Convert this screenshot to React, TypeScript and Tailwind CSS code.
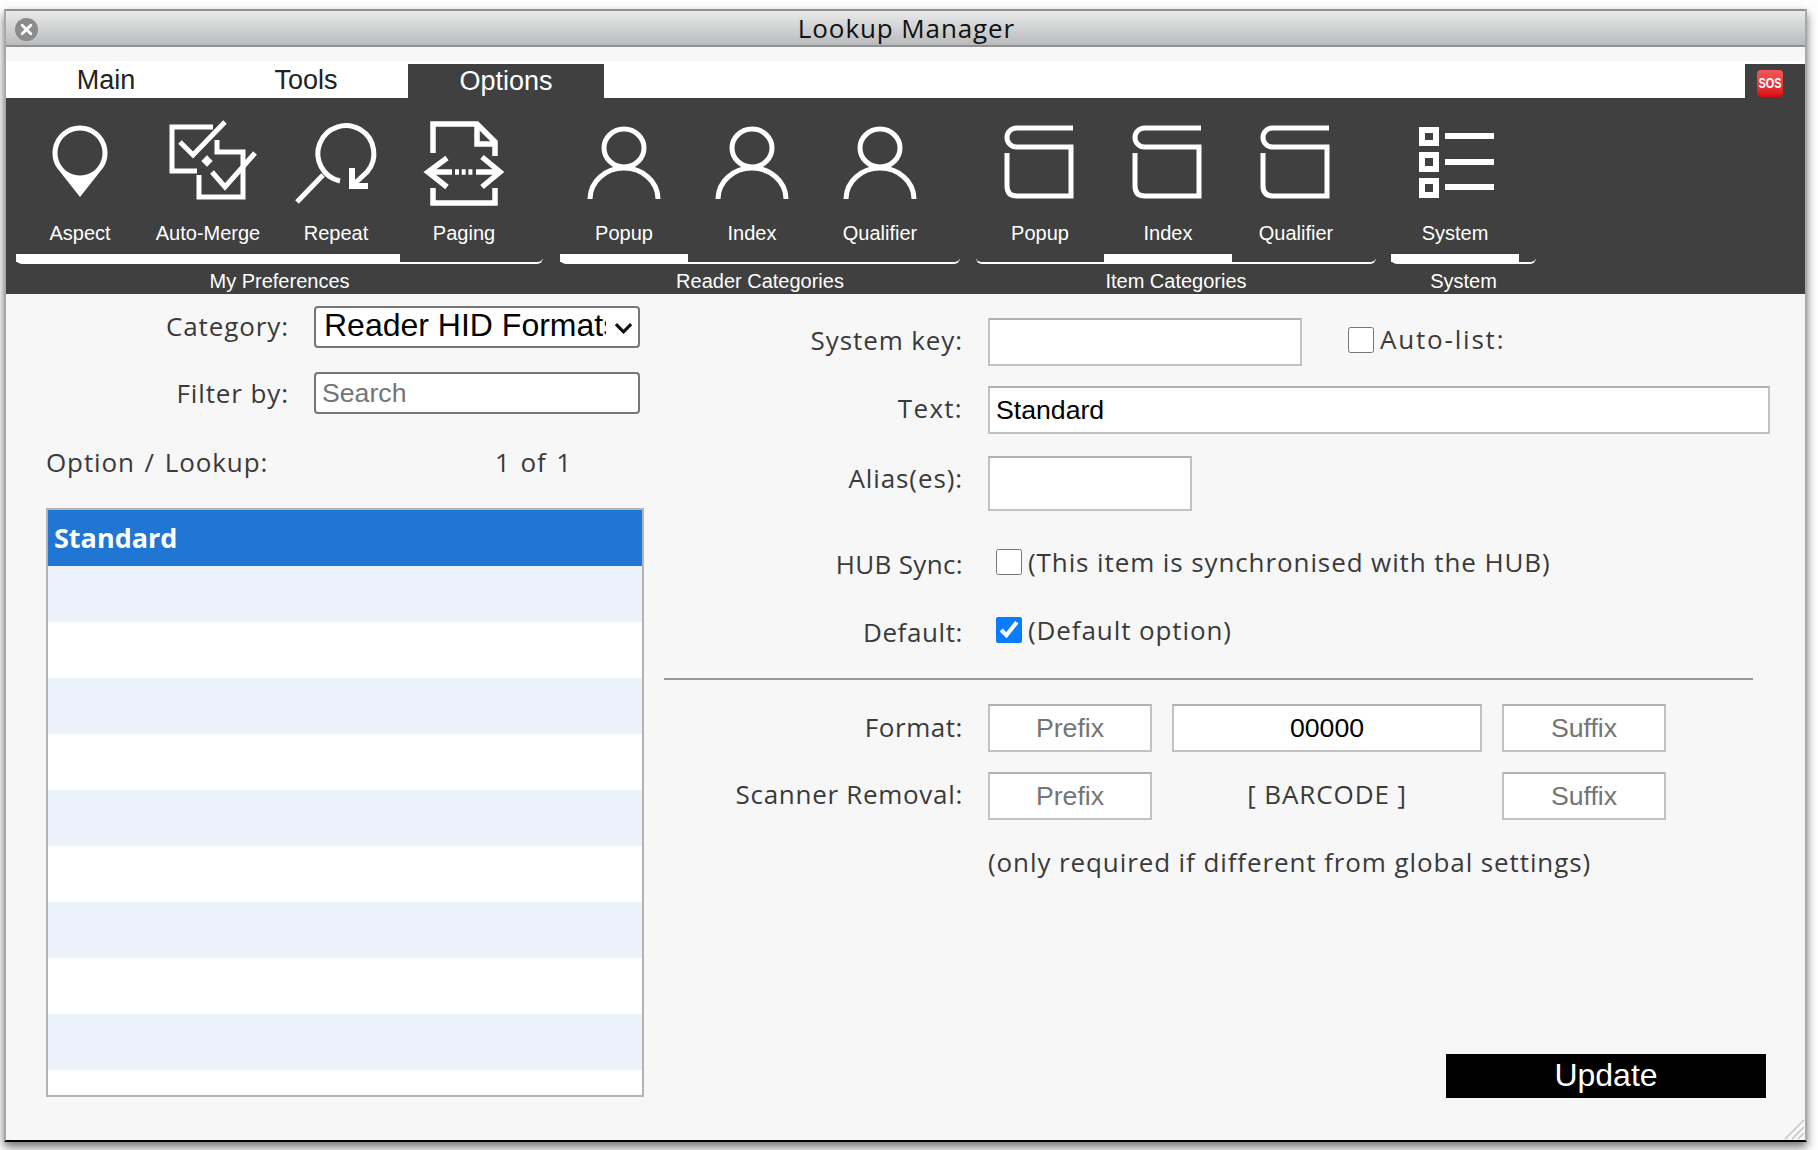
import { ReactNode } from 'react';

const stroke = { fill: 'none', stroke: '#fff', strokeWidth: 5 };

function PinIcon() {
  return (
    <svg viewBox="0 0 100 90" className="w-[100px] h-[90px]">
      <path
        fill="#fff"
        fillRule="evenodd"
        d="M50 79 L26.3 49 A27.5 27.5 0 1 1 73.7 49 Z M50 12.5 A22.5 22.5 0 1 0 50.01 12.5 Z"
      />
    </svg>
  );
}

function MergeIcon() {
  return (
    <svg viewBox="0 0 100 90" className="w-[100px] h-[90px]" style={{ overflow: 'visible' }}>
      <g {...stroke}>
        <path d="M55 9 H14 V53 H39" />
        <path d="M59 22 V34 H85 V79 H41 V57" />
        <path d="M22 24 L35 37 L67 4" />
        <path d="M54 54 L67 69 L97 35" />
      </g>
      <rect x="45" y="39" width="8" height="8" fill="#fff" transform="rotate(45 49 43)" />
    </svg>
  );
}

function RepeatIcon() {
  return (
    <svg viewBox="0 0 100 90" className="w-[100px] h-[90px]">
      <g {...stroke}>
        <path d="M54 63 A28 28 0 1 1 81 54 L66 68" />
        <path d="M66 50 V68 H82" strokeWidth={6} />
        <path d="M37 57 L11 84" />
      </g>
    </svg>
  );
}

function PagingIcon() {
  return (
    <svg viewBox="0 0 100 90" className="w-[100px] h-[90px]">
      <g {...stroke} strokeWidth={5.5}>
        <path d="M19 35 V6 H63 L81 24 V38" />
        <path d="M81 70 V85 H19 V70" />
        <path d="M63 6 V26 H81" />
        <path d="M33 40 L14 54 L33 69" />
        <path d="M68 39 L86 54 L68 69" />
        <path d="M14 54 H38" />
        <path d="M41 54 H59" strokeDasharray="4 2.7" />
        <path d="M62 54 H86" />
      </g>
    </svg>
  );
}

function PersonIcon() {
  return (
    <svg viewBox="0 0 100 90" className="w-[100px] h-[90px]">
      <g {...stroke}>
        <ellipse cx="50" cy="30" rx="20" ry="19" />
        <path d="M16 81 A34 31 0 0 1 84 81" />
      </g>
    </svg>
  );
}

function BoxIcon() {
  return (
    <svg viewBox="0 0 100 90" className="w-[100px] h-[90px]">
      <path
        {...stroke}
        d="M83 10 H26.5 A9.5 9.5 0 0 0 26.5 29 H81 V78 H27 Q17 78 17 68 V35"
      />
    </svg>
  );
}

function ListIcon() {
  return (
    <svg viewBox="0 0 100 90" className="w-[100px] h-[90px]">
      <g {...stroke} strokeWidth={6}>
        <rect x="17" y="12" width="14" height="13" />
        <rect x="17" y="37" width="14" height="14" />
        <rect x="17" y="63" width="14" height="14" />
        <path d="M40 18 H89 M40 44 H89 M40 69 H89" />
      </g>
    </svg>
  );
}

type Item = { label: string; icon: ReactNode; active?: boolean };

const groups: { title: string; className: string; items: Item[] }[] = [
  {
    title: 'My Preferences',
    className: 'w-[527px] mr-[17px]',
    items: [
      { label: 'Aspect', icon: <PinIcon />, active: true },
      { label: 'Auto-Merge', icon: <MergeIcon />, active: true },
      { label: 'Repeat', icon: <RepeatIcon />, active: true },
      { label: 'Paging', icon: <PagingIcon /> },
    ],
  },
  {
    title: 'Reader Categories',
    className: 'w-[400px] mr-[16px]',
    items: [
      { label: 'Popup', icon: <PersonIcon />, active: true },
      { label: 'Index', icon: <PersonIcon /> },
      { label: 'Qualifier', icon: <PersonIcon /> },
    ],
  },
  {
    title: 'Item Categories',
    className: 'w-[400px] mr-[15px]',
    items: [
      { label: 'Popup', icon: <BoxIcon /> },
      { label: 'Index', icon: <BoxIcon />, active: true },
      { label: 'Qualifier', icon: <BoxIcon /> },
    ],
  },
  {
    title: 'System',
    className: 'w-[145px]',
    items: [{ label: 'System', icon: <ListIcon />, active: true }],
  },
];

const labelFont = "font-['Open_Sans',sans-serif] text-[26px] tracking-[0.9px] text-[#3a3a3a]";
const fieldBase =
  'h-full bg-white border-2 border-[#c2c2c2] border-t-[#b2b2b2] text-[26.67px] text-black placeholder:text-[#757575] outline-none';

function FormRow({
  label,
  className,
  labelClass,
  children,
}: {
  label: string;
  className: string;
  labelClass?: string;
  children: ReactNode;
}) {
  return (
    <div className={`flex items-center ${className}`}>
      <div className={`w-[299px] mr-[25px] text-right whitespace-nowrap ${labelFont} ${labelClass ?? ''}`}>{label}</div>
      {children}
    </div>
  );
}

export default function App() {
  const rows = Array.from({ length: 11 }, (_, i) => i);

  return (
    <div className="w-[1818px] h-[1150px] bg-[#fdfdfd] pt-[9px] pl-[4px] font-['Liberation_Sans',Arial,sans-serif] overflow-hidden">
      <div className="relative w-[1803px] h-[1133px] flex flex-col border-x-2 border-x-[#a8a8a8] border-b-2 border-b-black shadow-[0_5px_9px_rgba(0,0,0,0.55)]">
        {/* Title bar */}
        <div className="relative h-[38px] shrink-0 flex items-center justify-center border-t-2 border-t-[#8f8f8f] border-b-2 border-b-[#8e9092] bg-gradient-to-b from-[#e9eaea] to-[#b9bbbd]">
          <div className="absolute left-[9px] top-[7px] w-[23px] h-[23px] rounded-full bg-[#8b8b8b] flex items-center justify-center">
            <svg viewBox="0 0 12 12" className="w-[13px] h-[13px]">
              <path d="M2 2 L10 10 M10 2 L2 10" stroke="#fff" strokeWidth="2.6" strokeLinecap="round" />
            </svg>
          </div>
          <span className="ml-[2px] font-['Open_Sans',sans-serif] text-[26px] tracking-[0.9px] text-[#111]">Lookup Manager</span>
        </div>
        <div className="h-[14px] shrink-0 bg-[#f7f7f7]" />

        {/* Tabs */}
        <div className="h-[37px] shrink-0 flex items-end bg-white text-[27px] text-[#222]">
          <div className="w-[200px] h-full pt-[2px] flex items-center justify-center">Main</div>
          <div className="w-[200px] h-full pt-[2px] flex items-center justify-center">Tools</div>
          <div className="ml-[2px] w-[196px] h-[34px] flex items-center justify-center bg-[#404040] text-white">Options</div>
          <div className="ml-auto w-[60px] h-[34px] bg-[#404040]">
            <div className="ml-[12px] mt-[6px] w-[26px] h-[27px] rounded-[4px] bg-gradient-to-b from-[#f5555a] to-[#d9040c] flex items-center justify-center text-[11px] font-bold text-white">
              <span className="scale-y-125">SOS</span>
            </div>
          </div>
        </div>

        {/* Ribbon */}
        <div className="h-[196px] shrink-0 flex pl-[10px] bg-[#404040] text-white text-[20px]">
          {groups.map((group) => (
            <div key={group.title} className={`flex flex-col ${group.className}`}>
              <div className="h-[166px] flex border-b-2 border-white rounded-b-[6px]">
                {group.items.map((item) => (
                  <div
                    key={item.label}
                    className={`w-[128px] h-[164px] flex flex-col items-center pt-[20px] border-b-8 ${
                      item.active ? 'border-white' : 'border-transparent'
                    }`}
                  >
                    {item.icon}
                    <div className="mt-[10px] h-[30px] leading-[30px]">{item.label}</div>
                  </div>
                ))}
              </div>
              <div className="h-[30px] leading-[34px] text-center">{group.title}</div>
            </div>
          ))}
        </div>

        {/* Body */}
        <div className="flex-1 flex bg-[#f7f7f7]">
          <div className="w-[658px] shrink-0 pl-[40px] flex flex-col">
            <div className="mt-[12px] h-[42px] flex items-center">
              <div className={`w-[243px] mr-[25px] text-right -mt-[1px] ${labelFont}`}>Category:</div>
              <div className="relative w-[326px] h-full">
                <select
                  defaultValue="Reader HID Formats"
                  className="appearance-none w-full h-full pl-[8px] pr-[32px] pb-[4px] leading-[32px] bg-white border-2 border-[#767676] rounded-[4px] text-[32px] text-black"
                >
                  <option>Reader HID Formats</option>
                  <option>Reader Categories</option>
                </select>
                <svg viewBox="0 0 20 12" className="absolute right-[7px] top-[16px] w-[19px] h-[12px]">
                  <path d="M2 2 L10 10 L18 2" fill="none" stroke="#111" strokeWidth="3.4" />
                </svg>
              </div>
            </div>
            <div className="mt-[24px] h-[42px] flex items-center">
              <div className={`w-[243px] mr-[25px] text-right ${labelFont}`}>Filter by:</div>
              <input
                placeholder="Search"
                className="w-[326px] h-full px-[6px] bg-white border-2 border-[#767676] rounded-[4px] text-[26.67px] placeholder:text-[#757575] outline-none"
              />
            </div>
            <div className={`mt-[29px] h-[38px] flex items-center [word-spacing:2px] ${labelFont}`}>
              <span className="w-[449px]">Option / Lookup:</span>
              <span>1 of 1</span>
            </div>
            <div className="mt-[27px] w-[598px] h-[589px] border-2 border-[#b3b3b3] bg-white overflow-hidden">
              <div className="h-[56px] px-[6px] flex items-center bg-[#1f76d3] text-white font-['Open_Sans',sans-serif] font-bold text-[27px]">
                Standard
              </div>
              {rows.map((i) => (
                <div key={i} className={`h-[56px] ${i % 2 === 0 ? 'bg-[#ebf2fb]' : 'bg-white'}`} />
              ))}
            </div>
          </div>

          <div className="flex-1 flex flex-col pb-[42px]">
            <FormRow label="System key:" labelClass="-mt-[4px]" className="mt-[24px] h-[48px]">
              <input className={`${fieldBase} w-[314px] px-[6px]`} />
              <input type="checkbox" className="ml-[46px] w-[26px] h-[26px] -mt-[4px]" />
              <span className={`ml-[6px] -mt-[6px] ${labelFont} tracking-[1.8px]!`}>Auto-list:</span>
            </FormRow>
            <FormRow label="Text:" labelClass="-mt-[4px] tracking-[1.3px]!" className="mt-[20px] h-[48px]">
              <input defaultValue="Standard" className={`${fieldBase} w-[782px] px-[6px]`} />
            </FormRow>
            <FormRow label="Alias(es):" labelClass="-mt-[10px]" className="mt-[22px] h-[55px]">
              <input className={`${fieldBase} w-[204px] px-[6px]`} />
            </FormRow>
            <FormRow label="HUB Sync:" labelClass="-mt-[1px] tracking-[0.35px]!" className="mt-[29px] h-[50px]">
              <input type="checkbox" className="ml-[8px] w-[26px] h-[26px] -mt-[6px]" />
              <span className={`ml-[6px] -mt-[6px] ${labelFont}`}>(This item is synchronised with the HUB)</span>
            </FormRow>
            <FormRow label="Default:" labelClass="tracking-[0.6px]!" className="mt-[17px] h-[50px]">
              <input type="checkbox" defaultChecked className="ml-[8px] w-[26px] h-[26px] -mt-[4px] accent-[#0a7cff]" />
              <span className={`ml-[6px] -mt-[4px] ${labelFont}`}>(Default option)</span>
            </FormRow>
            <div className="mt-[21px] w-[1089px] h-[2px] bg-[#999]" />
            <FormRow label="Format:" labelClass="-mt-[2px] tracking-[0.55px]!" className="mt-[24px] h-[48px]">
              <input placeholder="Prefix" className={`${fieldBase} w-[164px] text-center`} />
              <input defaultValue="00000" className={`${fieldBase} ml-[20px] w-[310px] text-center`} />
              <input placeholder="Suffix" className={`${fieldBase} ml-[20px] w-[164px] text-center`} />
            </FormRow>
            <FormRow label="Scanner Removal:" labelClass="-mt-[4px] tracking-[0.7px]!" className="mt-[20px] h-[48px]">
              <input placeholder="Prefix" className={`${fieldBase} w-[164px] text-center`} />
              <div className={`ml-[20px] w-[310px] -mt-[4px] text-center ${labelFont}`}>[ BARCODE ]</div>
              <input placeholder="Suffix" className={`${fieldBase} ml-[20px] w-[164px] text-center`} />
            </FormRow>
            <div className={`mt-[27px] h-[30px] ml-[324px] leading-[30px] ${labelFont}`}>
              (only required if different from global settings)
            </div>
            <button className="mt-auto ml-[782px] w-[320px] h-[44px] pb-[2px] bg-black text-white text-[32px] leading-[40px]">
              Update
            </button>
          </div>
        </div>

        {/* Resize grip */}
        <svg viewBox="0 0 22 22" className="absolute right-0 bottom-0 w-[22px] h-[22px]">
          <path d="M2 21 L21 2 M9 21 L21 9 M15 21 L21 15" stroke="#c4c4c4" strokeWidth="1.5" />
        </svg>
      </div>
    </div>
  );
}
